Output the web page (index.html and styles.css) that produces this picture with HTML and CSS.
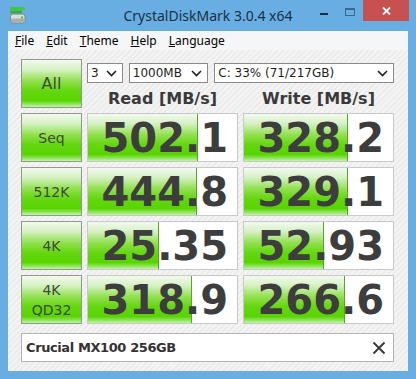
FILE: index.html
```html
<!DOCTYPE html>
<html>
<head>
<meta charset="utf-8">
<link rel="stylesheet" href="styles.css">
</head>
<body>
<div class="window">
  <div class="titlebar">
    <div class="tb-left">
      <svg class="app-icon" viewBox="0 0 16 17" width="16" height="17">
        <rect x="0" y="0" width="15" height="3" rx="1" fill="#3ec83a"/>
        <rect x="0" y="3.5" width="12" height="3" rx="1" fill="#2fb52c"/>
        <rect x="0.5" y="7" width="14.5" height="9" rx="2.5" fill="#d8dcdc" stroke="#7d8587" stroke-width="1"/>
        <rect x="1" y="11.5" width="13.5" height="4" rx="1.5" fill="#a9b0b2"/>
        <rect x="11" y="9.5" width="2" height="2" fill="#3ec83a"/>
      </svg>
    </div>
    <div class="title">CrystalDiskMark 3.0.4 x64</div>
    <div class="controls">
      <div class="ctl min"><span class="min-line"></span></div>
      <div class="ctl max"><span class="max-box"></span></div>
      <div class="ctl close">
        <svg viewBox="0 0 9 8" width="9" height="8"><path d="M1 0.5 L8 7.5 M8 0.5 L1 7.5" stroke="#fff" stroke-width="1.8" fill="none"/></svg>
      </div>
    </div>
  </div>
  <div class="client">
    <div class="menubar">
      <span class="mi"><u>F</u>ile</span>
      <span class="mi"><u>E</u>dit</span>
      <span class="mi"><u>T</u>heme</span>
      <span class="mi"><u>H</u>elp</span>
      <span class="mi"><u>L</u>anguage</span>
    </div>
    <div class="content">
      <div class="grid">
        <div class="btn btn-all">All</div>
        <div class="top-right">
          <div class="selects">
            <div class="sel sel-count">3<svg class="chev" viewBox="0 0 11 7" width="11" height="7"><path d="M1 1 L5.5 5.5 L10 1" stroke="#202020" stroke-width="1.6" fill="none"/></svg></div>
            <div class="sel sel-size">1000MB<svg class="chev" viewBox="0 0 11 7" width="11" height="7"><path d="M1 1 L5.5 5.5 L10 1" stroke="#202020" stroke-width="1.6" fill="none"/></svg></div>
            <div class="sel sel-drive">C: 33% (71/217GB)<svg class="chev" viewBox="0 0 11 7" width="11" height="7"><path d="M1 1 L5.5 5.5 L10 1" stroke="#202020" stroke-width="1.6" fill="none"/></svg></div>
          </div>
          <div class="headers">
            <div class="hdr">Read [MB/s]</div>
            <div class="hdr">Write [MB/s]</div>
          </div>
        </div>

        <div class="btn">Seq</div>
        <div class="cell"><div class="bar" style="width:110px"></div><div class="val">502.1</div></div>
        <div class="cell"><div class="bar" style="width:104px"></div><div class="val">328.2</div></div>

        <div class="btn">512K</div>
        <div class="cell"><div class="bar" style="width:109px"></div><div class="val">444.8</div></div>
        <div class="cell"><div class="bar" style="width:104px"></div><div class="val">329.1</div></div>

        <div class="btn">4K</div>
        <div class="cell"><div class="bar" style="width:71px"></div><div class="val">25.35</div></div>
        <div class="cell"><div class="bar" style="width:80px"></div><div class="val">52.93</div></div>

        <div class="btn btn-two">4K<br>QD32</div>
        <div class="cell"><div class="bar" style="width:104px"></div><div class="val">318.9</div></div>
        <div class="cell"><div class="bar" style="width:101px"></div><div class="val">266.6</div></div>
      </div>
      <div class="drive-box">
        <span class="drive-name">Crucial MX100 256GB</span>
        <svg class="drive-x" viewBox="0 0 14 14" width="14" height="14"><path d="M1.5 1.5 L12.5 12.5 M12.5 1.5 L1.5 12.5" stroke="#3a3a3a" stroke-width="2" fill="none"/></svg>
      </div>
    </div>
  </div>
</div>
</body>
</html>
```

FILE: styles.css
```css
html, body {
  margin: 0;
  padding: 0;
}
body {
  width: 416px;
  height: 379px;
  overflow: hidden;
  background: #68aee3;
}
.window {
  width: 416px;
  height: 379px;
  box-sizing: border-box;
  background: #68aee3;
  display: flex;
  flex-direction: column;
}
.titlebar {
  height: 31px;
  display: grid;
  grid-template-columns: 1fr auto 1fr;
  align-items: start;
}
.tb-left {
  padding: 7px 0 0 10px;
}
.app-icon {
  display: block;
}
.title {
  font: 14px "Noto Sans", sans-serif;
  color: #1b2f45;
  line-height: 31px;
  white-space: nowrap;
}
.controls {
  justify-self: end;
  display: flex;
  padding-right: 7px;
}
.ctl {
  height: 21px;
  display: flex;
  justify-content: center;
  align-items: flex-start;
}
.min {
  width: 26px;
}
.min-line {
  width: 8px;
  height: 2px;
  margin-top: 13px;
  background: #1c2c3c;
}
.max {
  width: 26px;
}
.max-box {
  width: 10px;
  height: 8px;
  margin-top: 8px;
  box-sizing: border-box;
  border: 1px solid #3d6690;
  border-top-width: 2px;
}
.close {
  width: 46px;
  background: #c75050;
  align-items: center;
}
.close svg {
  display: block;
}
.client {
  margin: 0 8px 8px;
  flex: 1;
  display: flex;
  flex-direction: column;
  background: #f0f0f0;
}
.menubar {
  height: 19px;
  background: #f5f6f7;
  display: flex;
  align-items: center;
  padding-left: 1px;
  font: 12px "Noto Sans", sans-serif;
  color: #000;
}
.mi {
  padding: 0 6px;
}
.mi u {
  text-decoration-thickness: 1px;
  text-underline-offset: 1px;
}
.content {
  flex: 1;
  padding: 9px 14px 9px 13px;
  display: flex;
  flex-direction: column;
  gap: 9px;
  background: repeating-linear-gradient(135deg, #f4f4f4 0 2px, #ececec 2px 4px);
}
.grid {
  display: grid;
  grid-template-columns: 61px 151px 151px;
  grid-auto-rows: 49px;
  gap: 5px;
}
.btn {
  box-sizing: border-box;
  border: 1px solid #8f9a8a;
  background: linear-gradient(#f3f9ef 0%, #d6f1c4 20%, #92e150 44%, #66d712 64%, #58d400 86%, #96e76a 95%, #c6f1ae 100%);
  display: flex;
  align-items: center;
  justify-content: center;
  text-align: center;
  font: 14px "DejaVu Sans", sans-serif;
  color: #3d4a35;
  line-height: 20px;
}
.btn-all {
  font-size: 16px;
}
.top-right {
  grid-column: 2 / 4;
  display: flex;
  flex-direction: column;
}
.selects {
  margin-top: 4px;
  display: flex;
  gap: 6px;
}
.sel {
  height: 20px;
  box-sizing: border-box;
  border: 1px solid #8a8a8a;
  background: #fff;
  display: flex;
  align-items: center;
  justify-content: space-between;
  padding: 0 5px 0 3px;
  font: 12px "DejaVu Sans", sans-serif;
  color: #1e1e1e;
  white-space: nowrap;
}
.chev {
  display: block;
}
.sel-count {
  width: 36px;
}
.sel-size {
  width: 80px;
}
.sel-drive {
  width: 181px;
}
.headers {
  flex: 1;
  display: grid;
  grid-template-columns: 151px 151px;
  gap: 5px;
  align-items: end;
}
.hdr {
  text-align: center;
  font: bold 16px "DejaVu Sans", sans-serif;
  line-height: 19px;
  color: #3a3a3a;
  white-space: nowrap;
}
.cell {
  box-sizing: border-box;
  border: 1px solid #c9c9c9;
  background: #fff;
  display: grid;
}
.bar {
  grid-area: 1 / 1;
  box-sizing: border-box;
  border-right: 1px solid #55a52a;
  background: linear-gradient(#f3f9ef 0%, #d6f1c4 20%, #92e150 44%, #66d712 64%, #58d400 86%, #96e76a 95%, #c6f1ae 100%);
}
.val {
  grid-area: 1 / 1;
  justify-self: end;
  align-self: center;
  padding-right: 9px;
  font: bold 40px "DejaVu Sans", sans-serif;
  line-height: 1;
  color: #3d3d3d;
  white-space: nowrap;
}
.drive-box {
  height: 29px;
  box-sizing: border-box;
  border: 1px solid #b4b4b4;
  background: #fff;
  display: flex;
  align-items: center;
  justify-content: space-between;
  padding: 0 7px 0 4px;
}
.drive-name {
  font: bold 13px "DejaVu Sans", sans-serif;
  letter-spacing: -0.4px;
  color: #333;
  white-space: nowrap;
}
.drive-x {
  display: block;
}
```
